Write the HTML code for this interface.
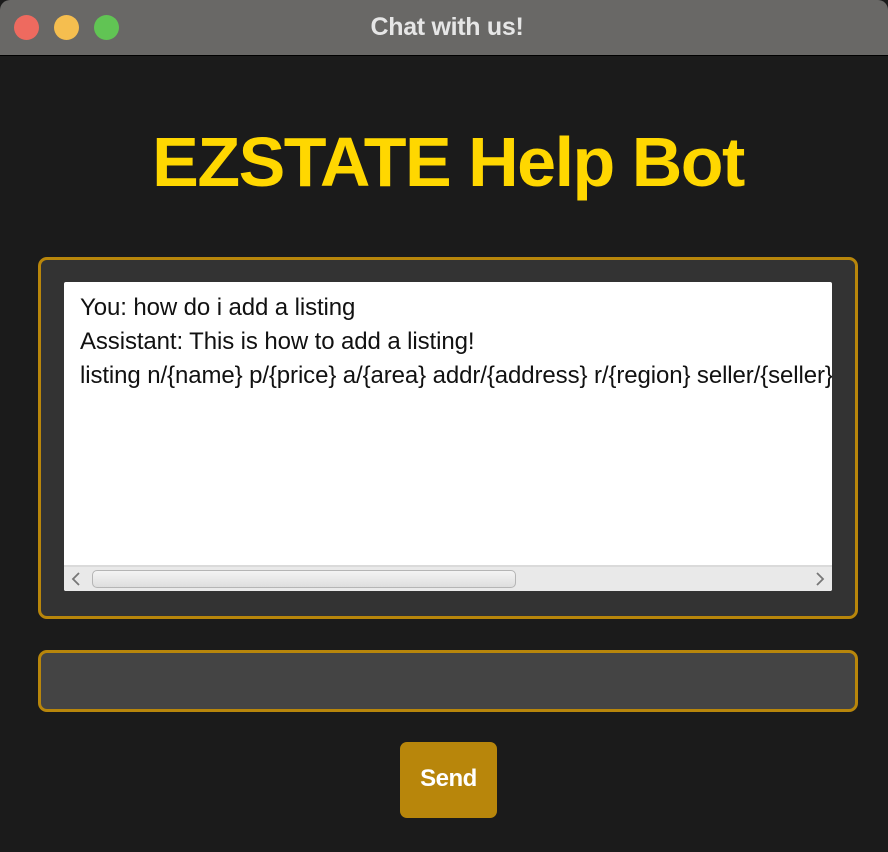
<!DOCTYPE html>
<html><head><meta charset="utf-8"><style>
*{margin:0;padding:0;box-sizing:border-box}
html,body{width:888px;height:852px;overflow:hidden;background:#1b1b1b;font-family:"Liberation Sans",sans-serif}
.tb{position:absolute;left:0;top:0;width:888px;height:56px;background:#696866;border-bottom:1px solid #000;border-radius:10px 10px 0 0}
.dot{position:absolute;top:15px;width:25px;height:25px;border-radius:50%}
.tt{position:absolute;top:0;left:0;width:894px;text-align:center;line-height:54px;color:#e6e6e6;font-weight:bold;font-size:25px;letter-spacing:-0.3px}
h1{position:absolute;top:122px;left:0;width:896px;text-align:center;color:#ffd700;font-size:70px;font-weight:bold;letter-spacing:-1.5px}
.panel{position:absolute;left:38px;top:257px;width:820px;height:362px;background:#333;border:3px solid #b8860b;border-radius:9px}
.ta{position:absolute;left:64px;top:282px;width:768px;height:309px;background:#fff;border-radius:2px;overflow:hidden}
.txt{position:absolute;left:16px;top:9px;font-size:24px;line-height:34px;color:#111;white-space:nowrap;letter-spacing:-0.1px}
.sb{position:absolute;left:0;bottom:0;width:768px;height:26px;background:#e9e9e9;border-top:2px solid #dadada}
.thumb{position:absolute;left:28px;top:3px;width:424px;height:18px;border:1.5px solid #b5b5b5;border-radius:5px;background:linear-gradient(#f4f4f4,#dedede)}
.inp{position:absolute;left:38px;top:650px;width:820px;height:62px;background:#444;border:3px solid #b8860b;border-radius:9px}
.btn{position:absolute;left:400px;top:742px;width:97px;height:76px;background:#b8860b;border-radius:7px;color:#fff;font-weight:bold;font-size:24px;text-align:center;line-height:74px;letter-spacing:-0.5px}
</style></head><body>
<div class="tb">
<div class="dot" style="left:14px;background:#ee6a5f"></div>
<div class="dot" style="left:54px;background:#f5be4f"></div>
<div class="dot" style="left:94px;background:#61c454"></div>
<div class="tt">Chat with us!</div>
</div>
<h1>EZSTATE Help Bot</h1>
<div class="panel"></div>
<div class="ta">
<div class="txt">You: how do i add a listing<br>Assistant: This is how to add a listing!<br>listing n/{name} p/{price} a/{area} addr/{address} r/{region} seller/{seller}</div>
<div class="sb">
<svg style="position:absolute;left:6px;top:4px" width="12" height="16"><path d="M9 2 L3 8 L9 14" stroke="#777" stroke-width="1.8" fill="none"/></svg>
<div class="thumb"></div>
<svg style="position:absolute;left:750px;top:4px" width="12" height="16"><path d="M3 2 L9 8 L3 14" stroke="#777" stroke-width="1.8" fill="none"/></svg>
</div>
</div>
<div class="inp"></div>
<div class="btn">Send</div>
</body></html>
